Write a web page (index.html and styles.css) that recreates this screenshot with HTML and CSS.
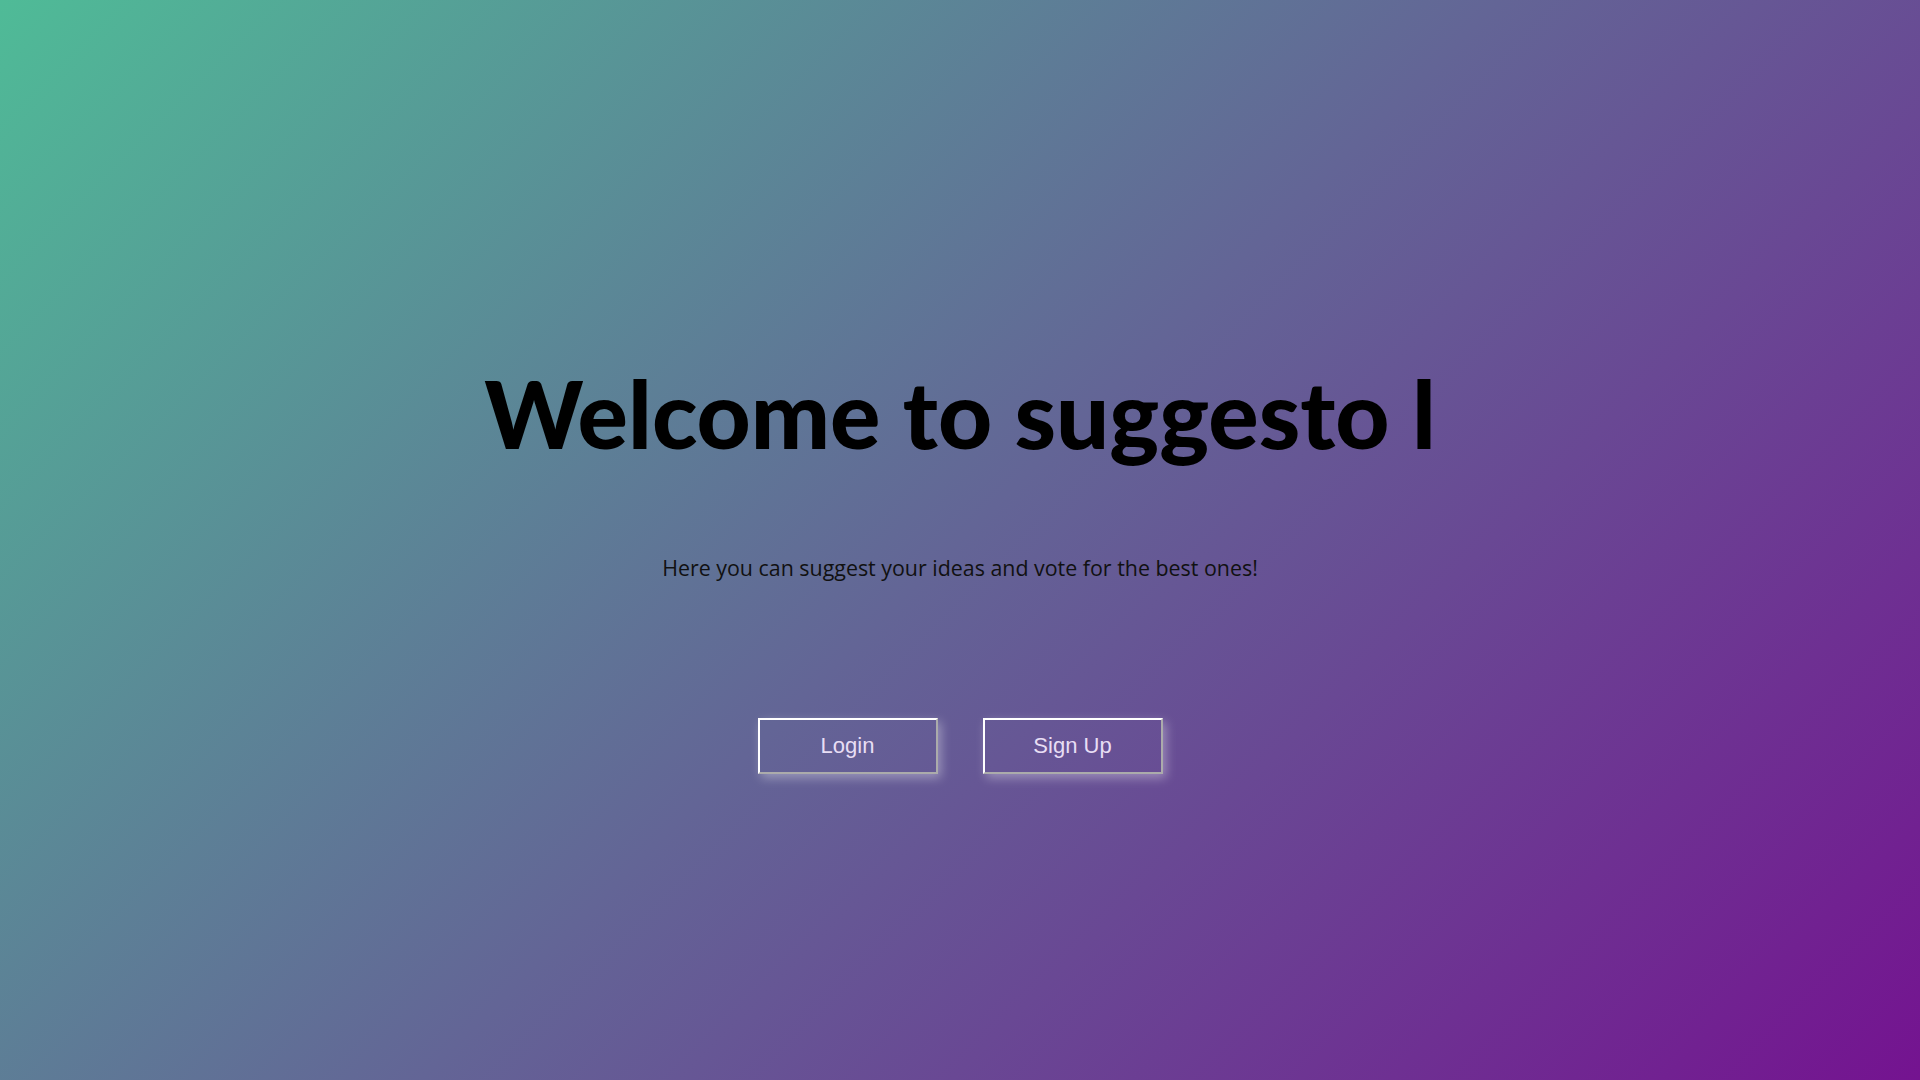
FILE: index.html
```html
<!DOCTYPE html>
<html lang="en">
<head>
<meta charset="utf-8">
<title>suggestol</title>
<link rel="stylesheet" href="styles.css">
</head>
<body>
<main class="page">
  <h1 class="title">Welcome to suggesto l</h1>
  <p class="subtitle">Here you can suggest your ideas and vote for the best ones!</p>
  <div class="actions">
    <button class="btn" type="button">Login</button>
    <button class="btn" type="button">Sign Up</button>
  </div>
</main>
</body>
</html>
```

FILE: styles.css
```css
html, body {
  margin: 0;
  padding: 0;
  height: 100%;
}

.page {
  box-sizing: border-box;
  min-height: 100vh;
  display: flex;
  flex-direction: column;
  align-items: center;
  padding-top: 366px;
  background: linear-gradient(135deg, #4fbb97 0%, #636596 50%, #741390 100%);
}

.title {
  margin: 0;
  font-family: "Gill Sans", "Gill Sans MT", Lato, sans-serif;
  font-weight: 900;
  font-size: 94px;
  line-height: 94px;
  color: #000;
}

.subtitle {
  margin: 93px 0 0;
  font-family: "Segoe UI", "Open Sans", sans-serif;
  font-size: 21.4px;
  line-height: 30px;
  color: #111;
}

.actions {
  margin-top: 135px;
  display: flex;
  gap: 45px;
}

.btn {
  box-sizing: border-box;
  width: 180px;
  height: 56px;
  background: transparent;
  border: 2px outset #fff;
  box-shadow: 3px 4px 10px rgba(255, 255, 255, 0.35);
  font-family: "Liberation Sans", Arial, sans-serif;
  font-size: 22px;
  color: #e8def4;
  cursor: pointer;
}
```
